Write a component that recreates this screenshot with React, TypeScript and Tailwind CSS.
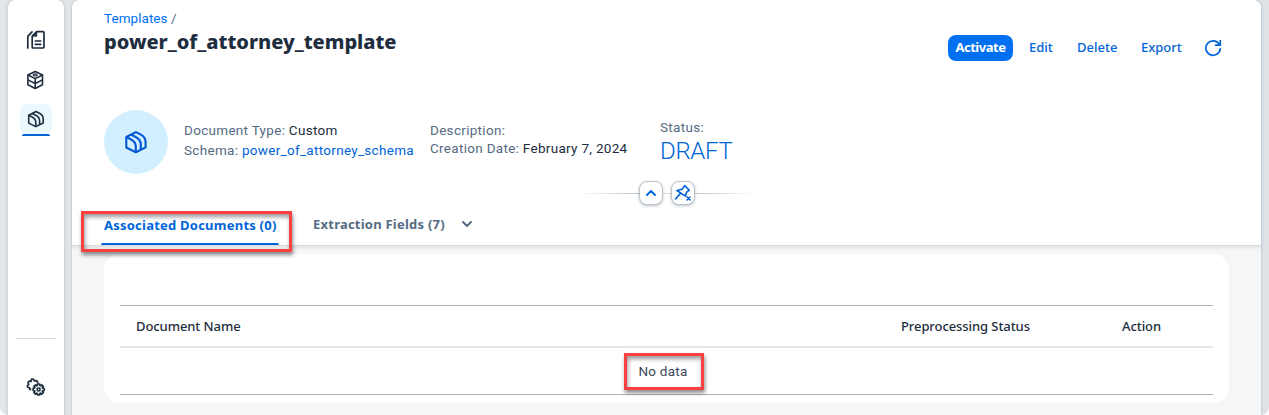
import React from "react";

type IconProps = { className?: string };

function DocumentsIcon({ className = "" }: IconProps) {
  return (
    <svg viewBox="0 0 20 20" width="20" height="20" className={className} fill="none" stroke="currentColor" strokeWidth="1.7" strokeLinejoin="round" strokeLinecap="round">
      <path d="M10.600 1.700H17a1 1 0 0 1 1 1V17a1 1 0 0 1-1 1H7.200a1 1 0 0 1-1-1V6z" />
      <path d="M10.800 1.800v4.400H6.400z" fill="currentColor" strokeWidth="0.8" />
      <path d="M1.800 18V6.300L6 1.800" />
      <path d="M9.300 11h5.400M9.300 14.300h5.400" />
    </svg>
  );
}

function CubeIcon({ className = "" }: IconProps) {
  return (
    <svg viewBox="0 0 20 20" width="20" height="20" className={className} fill="none" stroke="currentColor" strokeWidth="1.6" strokeLinejoin="round">
      <path d="M9.200 1.500 16.500 5v9.800l-7.300 3.700-7.300-3.700V5z" />
      <path d="M1.900 5l7.300 3.600L16.500 5M9.200 8.600v9.900M1.900 9.900l7.300 3.600 7.300-3.600" />
      <ellipse cx="9.200" cy="4.900" rx="2" ry="1" strokeWidth="1.100" />
    </svg>
  );
}

function TemplatesIcon({ className = "" }: IconProps) {
  return (
    <svg viewBox="0 0 24 24" width="24" height="24" className={className} fill="none" stroke="currentColor" strokeWidth="2.100" strokeLinejoin="round">
      <path d="M11.800 22.200 2.300 17.500V7L12 2.100l4 2c3.800 1.900 5.600 4.100 5.600 7.600v5.700z" />
      <path d="M2.300 7l4 2c3.900 1.900 5.500 4.200 5.500 7.600v5.600" />
      <path d="M7 4.600l4.200 2.100c3.900 1.900 5.600 4.200 5.600 7.600v5.400" />
    </svg>
  );
}

function gear(cx: number, cy: number, r: number, tooth: number) {
  const pts: string[] = [];
  for (let i = 0; i < 8; i++) {
    const a = (i * Math.PI) / 4;
    [[-0.3, r], [-0.2, r + tooth], [0.2, r + tooth], [0.3, r]].forEach(([d, q]) => {
      pts.push(`${(cx + q * Math.cos(a + d)).toFixed(2)},${(cy + q * Math.sin(a + d)).toFixed(2)}`);
    });
  }
  return pts.join(" ");
}

function SettingsIcon() {
  return (
    <svg viewBox="0 0 20 20" width="20" height="20" fill="none" stroke="currentColor" strokeWidth="1.700" strokeLinejoin="round">
      <path d="M5.300 12.400 3.800 12.300 3.500 10.700 1.700 10.200 1.400 8.600 2.700 7.500 2 5.500 3.200 4.200 5 4.500 5.600 2 7.400 2 8.300 3.900 10.400 3.700 11.700 4.900 11.500 6.300" />
      <polygon points={gear(12.6, 12.5, 4.2, 1.4)} />
      <circle cx="12.600" cy="12.500" r="1.500" />
    </svg>
  );
}

function RefreshIcon() {
  return (
    <svg viewBox="0 0 18 18" width="18" height="18" fill="none" stroke="currentColor" strokeWidth="1.700" strokeLinecap="round" strokeLinejoin="round">
      <path d="M16.200 9.800A7.200 7.200 0 1 1 15.400 5.700" />
      <path d="M16.300 1.500v4.700h-4.700" />
    </svg>
  );
}

function UnpinIcon() {
  return (
    <svg viewBox="0 0 18 18" width="18" height="18" fill="none" stroke="currentColor" strokeWidth="1.600" strokeLinecap="round" strokeLinejoin="round">
      <path d="M10.700 1.600 15.300 6.200 12.400 8.400 11.500 12.200 2.900 6.500 8.100 5.200z" />
      <path d="M6.300 9.600 1.500 15" />
      <path d="M13.100 13l2.900 2.900M16 13l-2.900 2.900" />
    </svg>
  );
}

function Chevron({ up = false }: { up?: boolean }) {
  return (
    <svg viewBox="0 0 10 6" width="10" height="6" fill="none" stroke="currentColor" strokeWidth="1.900" strokeLinecap="round" strokeLinejoin="round">
      <path d={up ? "M1 5l4-4 4 4" : "M1 1l4 4 4-4"} />
    </svg>
  );
}

function Sidebar() {
  return (
    <aside className="relative ml-2 flex h-[440px] w-14 shrink-0 flex-col items-center rounded-t-lg bg-white pt-6 text-[#1d2d3e] shadow-[0_0_4px_rgba(85,107,130,0.3)]">
      <div className="flex h-8 w-8 items-center justify-center"><DocumentsIcon /></div>
      <div className="mt-2 flex h-8 w-8 items-center justify-center"><CubeIcon /></div>
      <div className="mt-2 flex h-8 w-8 flex-col items-center rounded-lg bg-[#ebf8ff] pt-[6px]">
        <TemplatesIcon className="h-[18px] w-[18px] shrink-0" />
        <span className="mt-[6px] h-[2px] w-7 shrink-0 rounded-t bg-[#0064d9]" />
      </div>
      <div className="mt-[202px] h-px w-10 bg-[#d9d9d9]" />
      <div className="mt-[38px]"><SettingsIcon /></div>
    </aside>
  );
}

function PageHeader() {
  return (
    <header className="relative z-10 h-[246px] shrink-0 rounded-t-lg border-b border-[#d9d9d9] bg-white pl-8 shadow-[0_2px_3px_rgba(85,107,130,0.12)]">
      <div className="flex h-[70px] justify-between">
        <div className="pt-[9px]">
          <div className="text-[13.500px] leading-[18px] tracking-[0.050px] text-[#556b82]"><a className="text-[#0070f2]">Templates</a> /</div>
          <h1 className="font-['Noto_Sans',sans-serif] text-[20px] font-extrabold leading-[30px] tracking-[-0.020px]">power_of_attorney_template</h1>
        </div>
        <div className="mt-[35px] flex h-[26px] items-center self-start font-['Noto_Sans',sans-serif] text-[13px] font-medium text-[#0064d9]">
          <button className="mr-4 h-[26px] w-[65px] rounded-lg bg-[#0070f2] font-bold tracking-[-0.450px] text-white">Activate</button>
          <button className="w-12 text-left">Edit</button>
          <button className="w-16 text-left">Delete</button>
          <button className="w-16 text-left">Export</button>
          <button className="mr-[39px] -ml-px"><RefreshIcon /></button>
        </div>
      </div>
      <div className="flex h-[110px] pt-10 text-[13.500px] leading-5 tracking-[0.300px] text-[#556b82]">
        <div className="flex h-16 w-16 shrink-0 items-center justify-center rounded-full bg-[#d1efff] text-[#0057d2]"><TemplatesIcon /></div>
        <div className="ml-4 w-[246px] shrink-0 whitespace-nowrap pt-[10px]">
          <div>Document Type: <span className="text-[#1d2d3e]">Custom</span></div>
          <div>Schema: <a className="text-[#0064d9]">power_of_attorney_schema</a></div>
        </div>
        <div className="w-[230px] shrink-0 whitespace-nowrap pt-[11px] leading-[18px]">
          <div>Description:</div>
          <div>Creation Date: <span className="text-[#1d2d3e]">February 7, 2024</span></div>
        </div>
        <div className="pt-[8px] leading-[18px]">
          <div>Status:</div>
          <div className="text-[24px] font-light leading-[30px] tracking-[-0.300px] text-[#0064d9]">DRAFT</div>
        </div>
      </div>
      <div className="ml-[474px] flex h-[26px] w-[176px] items-center text-[#0064d9]">
        <span className="h-px w-[61px] bg-linear-to-r from-transparent to-[#bcc3ca]" />
        <button className="flex h-6 w-6 items-center justify-center rounded-lg border border-[#bcc3ca] bg-white shadow-[0_1px_3px_rgba(34,53,72,0.300)]"><Chevron up /></button>
        <span className="h-px w-2 bg-[#d9d9d9]" />
        <button className="flex h-6 w-6 items-center justify-center rounded-lg border border-[#bcc3ca] bg-white shadow-[0_1px_3px_rgba(34,53,72,0.300)]"><UnpinIcon /></button>
        <span className="h-px w-[59px] bg-linear-to-l from-transparent to-[#bcc3ca]" />
      </div>
      <nav className="flex h-[39px] font-['Noto_Sans',sans-serif] text-[13px] font-bold tracking-[0.230px]">
        <div className="flex w-[209px] flex-col whitespace-nowrap text-[#0064d9]">
          <span className="h-[37px] pt-[9px] leading-5">Associated Documents (0)</span>
          <span className="-ml-[3px] h-[2px] w-[178px] rounded-t bg-[#0064d9]" />
        </div>
        <div className="flex h-[36px] pt-[8px] leading-5 text-[#556b82]">
          <span className="w-[149px]">Extraction Fields (7)</span>
          <span className="pt-[7px]"><Chevron /></span>
        </div>
      </nav>
      <div className="pointer-events-none absolute left-[9px] top-[211px] h-[41px] w-[211px] border-[3px] border-[#fa4040] shadow-[1px_3px_4px_rgba(0,0,0,0.45),inset_1px_3px_4px_rgba(0,0,0,0.400)]" />
    </header>
  );
}

function DocumentsTable() {
  return (
    <section className="mx-8 mt-2 h-[149px] rounded-2xl bg-white px-4 pt-[51px] text-[13.500px] tracking-[0.200px] text-[#1d2d3e]">
      <div className="flex h-[43px] items-center border-b-2 border-t border-b-[#e5e5e5] border-t-[#a8b3bd] px-4 pt-px font-['Noto_Sans',sans-serif] text-[13px] font-medium tracking-[-0.080px]">
        <span className="w-[765px]">Document Name</span>
        <span className="w-[221px]">Preprocessing Status</span>
        <span>Action</span>
      </div>
      <div className="flex h-[47px] items-center justify-center border-b border-[#a8b3bd] pr-[5px] text-[#3b4a5a]">
        <div className="mt-px flex h-[37px] w-[80px] items-center justify-center border-[3px] border-[#fa4040] pr-[2px] tracking-[0.250px] shadow-[1px_3px_4px_rgba(0,0,0,0.45),inset_1px_3px_4px_rgba(0,0,0,0.400)]">No data</div>
      </div>
    </section>
  );
}

export default function App() {
  return (
    <div className="h-[415px] w-full overflow-hidden bg-white font-[Roboto,sans-serif] text-[#1d2d3e]">
      <div className="flex h-full rounded-b-lg bg-linear-to-r from-[#e3e8eb] via-[#d5dadd] to-[#dfe3e7]">
        <Sidebar />
        <main className="ml-2 flex h-[440px] w-[1189px] shrink-0 flex-col rounded-t-lg bg-[#f5f6f7] shadow-[0_0_3px_rgba(85,107,130,0.35)]">
          <PageHeader />
          <DocumentsTable />
        </main>
      </div>
    </div>
  );
}
